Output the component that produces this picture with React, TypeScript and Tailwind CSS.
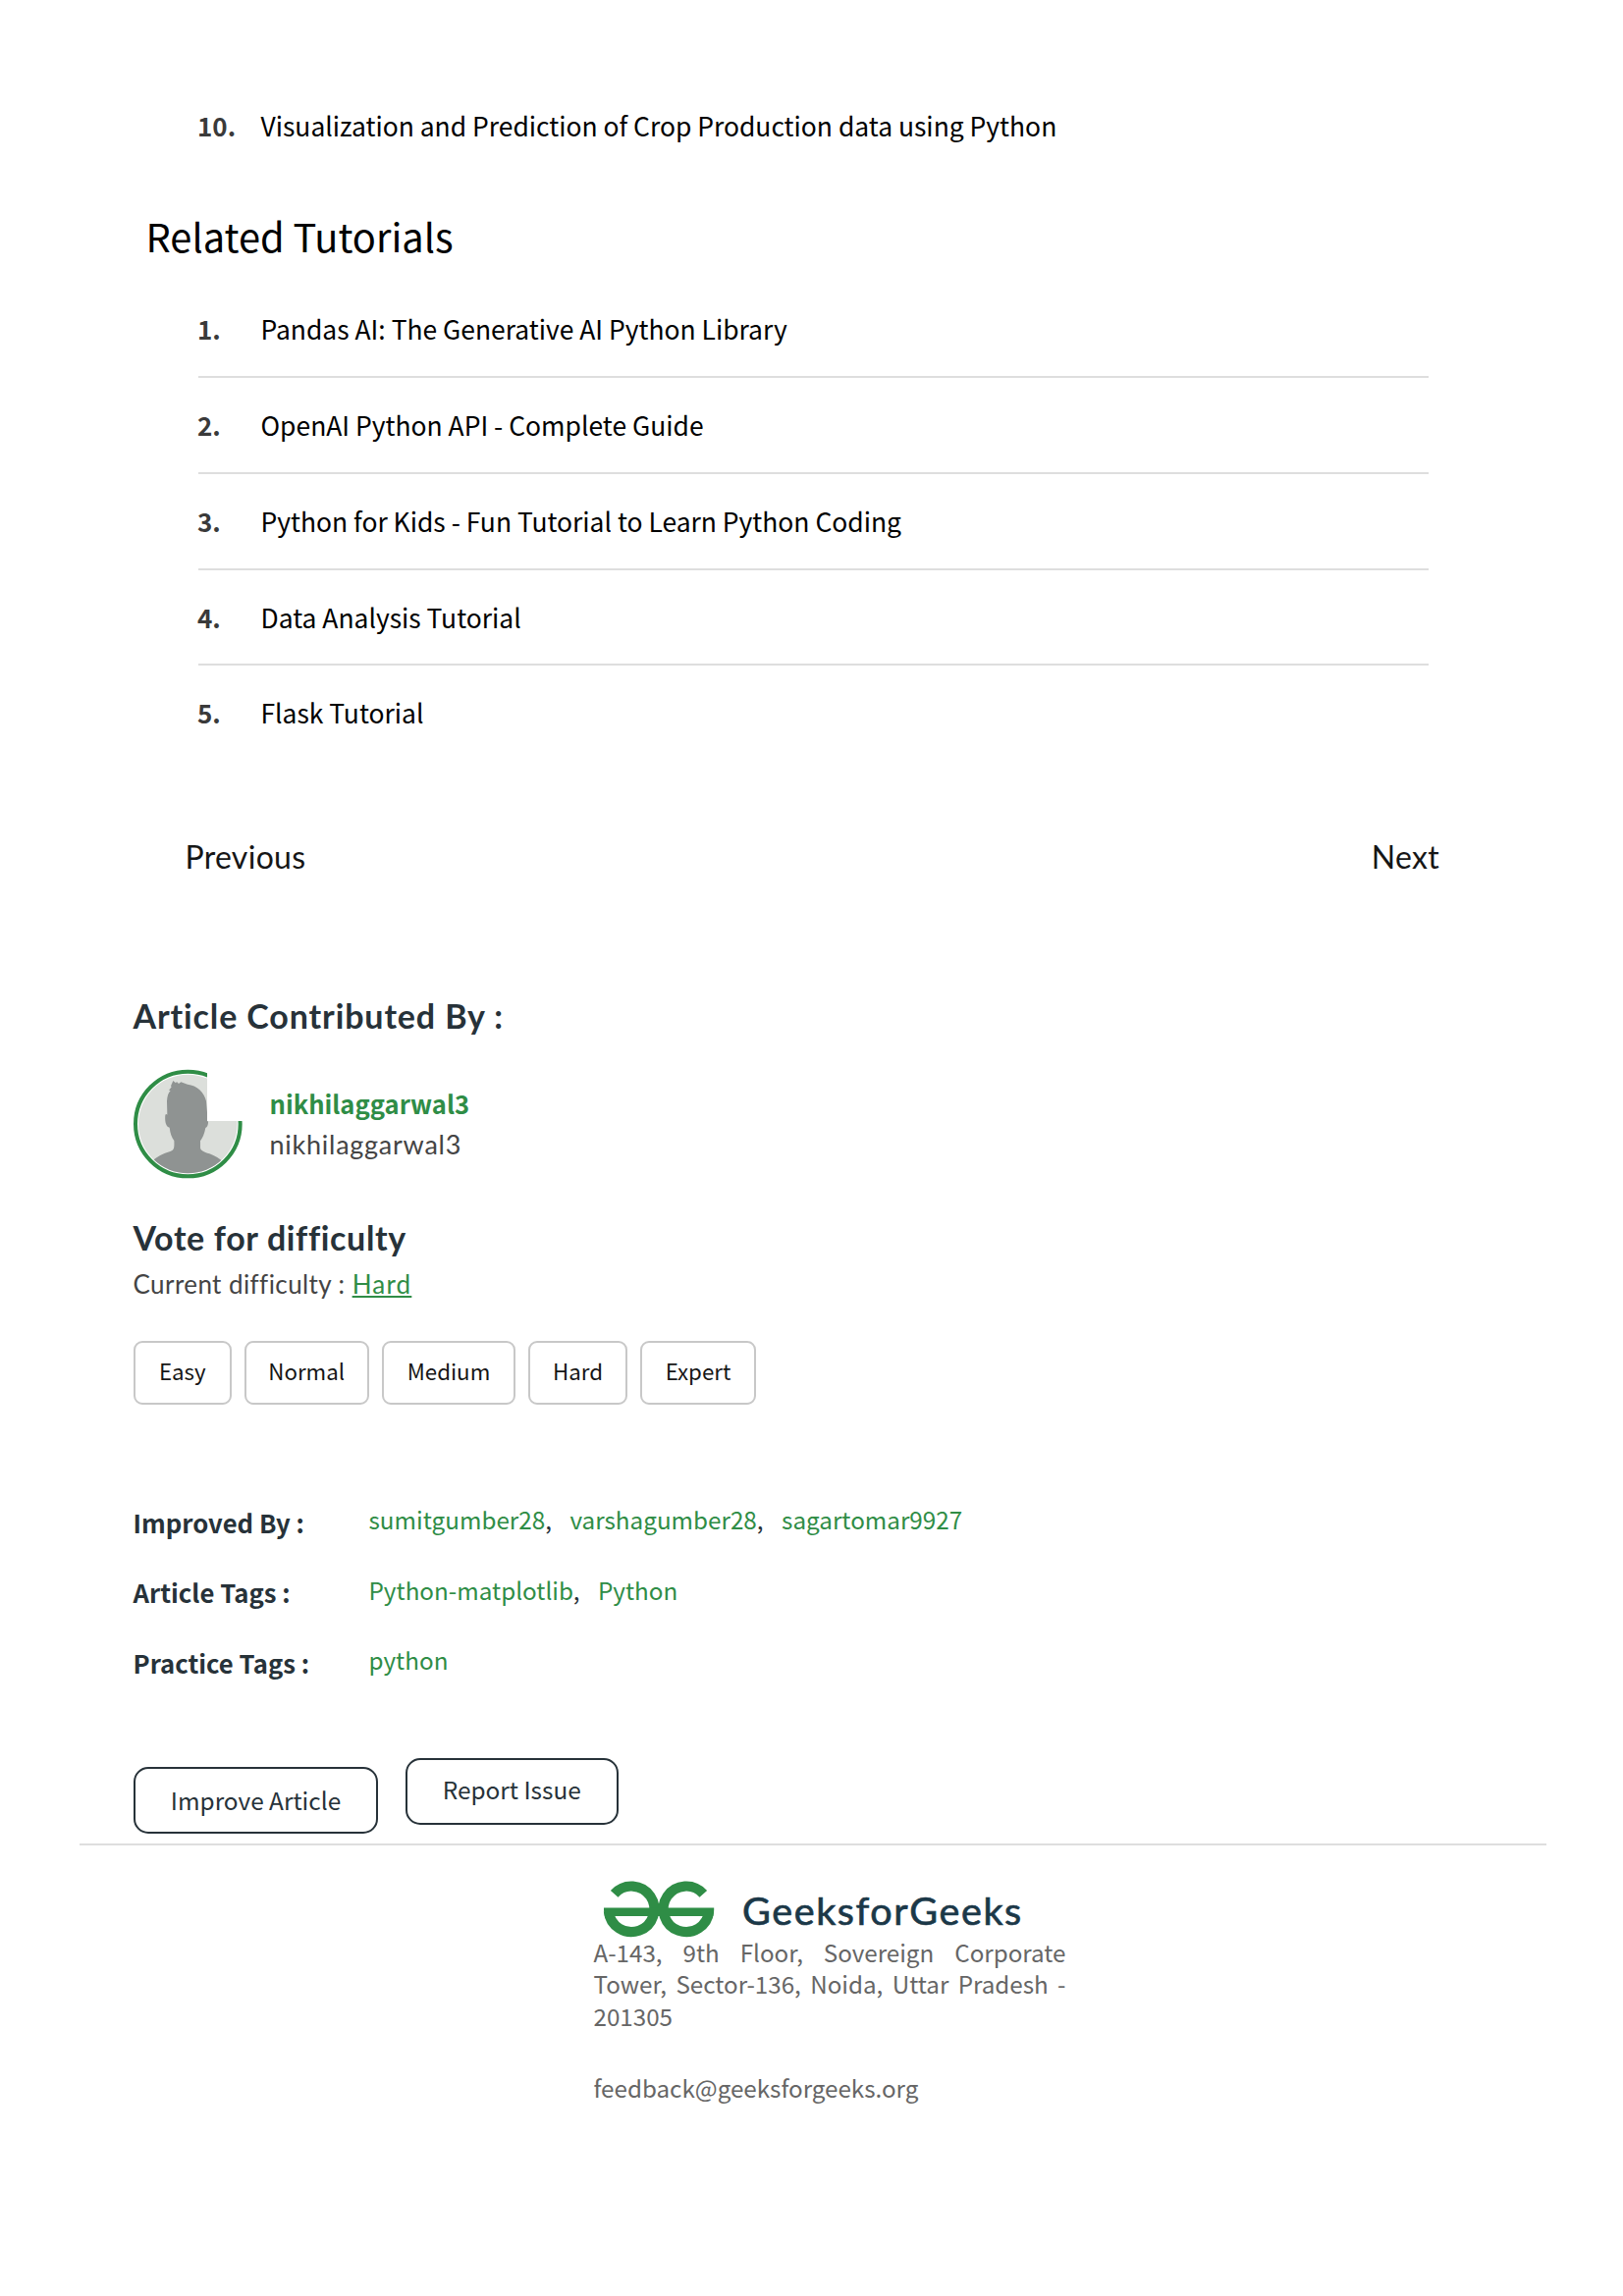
import React from 'react';

const tutorials = [
  'Pandas AI: The Generative AI Python Library',
  'OpenAI Python API - Complete Guide',
  'Python for Kids - Fun Tutorial to Learn Python Coding',
  'Data Analysis Tutorial',
  'Flask Tutorial',
];

const levels = [
  { label: 'Easy', width: 'w-[99.5px]' },
  { label: 'Normal', width: 'w-[127.5px]' },
  { label: 'Medium', width: 'w-[136px]' },
  { label: 'Hard', width: 'w-[101px]' },
  { label: 'Expert', width: 'w-[118px]' },
];

const meta = [
  { label: 'Improved By :', values: ['sumitgumber28', 'varshagumber28', 'sagartomar9927'] },
  { label: 'Article Tags :', values: ['Python-matplotlib', 'Python'] },
  { label: 'Practice Tags :', values: ['python'] },
];

function ListRow({ n, text, line }: { n: number; text: string; line?: boolean }) {
  return (
    <li
      className={`flex h-[97.75px] pt-[31px] text-[26.45px] leading-[34.5px] ${
        line ? 'border-b-2 border-[#dedede]' : ''
      }`}
    >
      <span className="-ml-[1px] w-[64.5px] shrink-0 text-[26px] font-bold text-[#3a3a3a]">{n}.</span>
      <a className="text-black whitespace-nowrap">{text}</a>
    </li>
  );
}

function Avatar() {
  return (
    <svg className="-ml-[6px] block h-[125px] w-[125px] shrink-0" viewBox="0 0 375 375">
      <defs>
        <clipPath id="corner">
          <path d="M0 0H243V186H375V375H0Z" />
        </clipPath>
        <clipPath id="disc">
          <circle cx="184" cy="195" r="151" />
        </clipPath>
      </defs>
      <g clipPath="url(#corner)">
        <circle cx="184" cy="195" r="151" fill="#dcdfdb" />
        <circle cx="184" cy="195" r="160" fill="none" stroke="#2f8d46" strokeWidth="12" />
      </g>
      <g clipPath="url(#disc)">
        <path
          fill="#8f9392"
          d="M70 312Q98 287 130 279C142 275 143 268 142 246C135 236 130 224 128 206C117 203 113 188 115 168C116 164 119 164 121 167L120 125C121 110 124 100 131 93L126 92L134 82L132 79L139 63L147 70L150 66L156 72L163 67L183 74C212 77 234 98 240 125L243 160V186Q247 186 246 192C245 200 243 205 238 207C235 224 229 238 222 247V266C222 276 232 280 250 286Q274 294 298 316V375H70Z"
        />
      </g>
    </svg>
  );
}

function Logo() {
  return (
    <div className="flex h-[64px] items-start pl-[9.5px]">
      <svg className="block h-[64px] w-[114px] shrink-0" viewBox="614 1909 114 64" overflow="visible">
        <g fill="none" stroke="#2f8d46" strokeWidth="10.2">
          <path d="M625.7 1929.3A23.3 23.3 0 1 1 619.9 1947" />
          <path d="M716.3 1929.3A23.3 23.3 0 1 0 722.1 1947" />
        </g>
        <path fill="#2f8d46" d="M615 1943.4H727.2V1946L726.4 1951.9H615.8L615 1946Z" />
      </svg>
      <span className="ml-[28px] mt-[12.5px] whitespace-nowrap font-[Lato] text-[39.5px] leading-[48px] tracking-[1.6px] text-[#1b3848] [-webkit-text-stroke:0.7px_#1b3848]">
        GeeksforGeeks
      </span>
    </div>
  );
}

export default function App() {
  return (
    <div className="h-[2339px] w-[1653px] overflow-hidden bg-white font-['Noto_Sans_CJK_SC',sans-serif]">
      <ul className="ml-[202px] w-[1253px] pt-[80.25px]">
        <ListRow n={10} text="Visualization and Prediction of Crop Production data using Python" />
      </ul>
      <h2 className="mt-[32.3px] ml-[148.5px] text-[39.8px] leading-[60px] text-black">Related Tutorials</h2>
      <ul className="mt-[17px] ml-[202px] w-[1253px]">
        {tutorials.map((t, i) => (
          <ListRow key={t} n={i + 1} text={t} line={i < tutorials.length - 1} />
        ))}
      </ul>

      <div className="mt-[76.6px] ml-[188.5px] flex w-[1277.5px] justify-between font-[Lato] text-[32px] leading-[40px] tracking-[0.3px] text-[#161616]">
        <span>Previous</span>
        <span>Next</span>
      </div>

      <section className="ml-[136px] mt-[121.9px]">
        <h3 className="-ml-[0.5px] font-[Lato] text-[34px] font-bold leading-[40px] tracking-[0.88px] text-[#273239]">
          Article Contributed By :
        </h3>
        <div className="mt-[25.5px] flex h-[125px]">
          <Avatar />
          <div className="ml-[19.5px] pt-[23.5px] leading-[40px]">
            <div className="text-[25.6px] font-bold text-[#2f8d46]">nikhilaggarwal3</div>
            <div className="mt-[2.7px] font-[Lato] text-[27px] tracking-[0.75px] text-[#444]">nikhilaggarwal3</div>
          </div>
        </div>
        <h3 className="-ml-[0.5px] mt-[36.1px] font-[Lato] text-[34px] font-bold leading-[40px] tracking-[0.65px] text-[#273239]">
          Vote for difficulty
        </h3>
        <p className="-ml-[0.5px] mt-[7.2px] font-[Lato] text-[26px] leading-[40px] tracking-[0.42px] text-[#444]">
          Current difficulty :{' '}
          <span className="tracking-[1.2px] text-[#2f8d46] underline decoration-2 underline-offset-[2px]">Hard</span>
        </p>
        <div className="mt-[37.7px] flex gap-[13px]">
          {levels.map((l) => (
            <button
              key={l.label}
              className={`${l.width} h-[65px] rounded-[9px] border-2 border-[#c8c8c8] pb-[6px] text-[22.3px] leading-[40px] text-[#161616]`}
            >
              {l.label}
            </button>
          ))}
        </div>
        <dl className="mt-[96.5px] h-[263.5px] leading-[40px]">
          {meta.map((m) => (
            <div key={m.label} className="flex h-[71.8px]">
              <dt className="-ml-[0.5px] w-[240px] pt-[3.2px] text-[25.7px] font-bold text-[#273239]">{m.label}</dt>
              <dd className="flex gap-[18.5px] pt-[0.4px] text-[24.25px] text-[#2f8d46]">
                {m.values.map((v, i) => (
                  <span key={v}>
                    {v}
                    {i < m.values.length - 1 && <span className="text-[#273239]">,</span>}
                  </span>
                ))}
              </dd>
            </div>
          ))}
        </dl>
        <div className="flex items-start gap-[27.5px] text-[24.4px] leading-[40px] text-[#273239]">
          <button className="mt-[9px] h-[68px] w-[249px] rounded-[15px] border-2 border-[#273239] pb-[1px]">
            Improve Article
          </button>
          <button className="h-[68px] w-[217.5px] rounded-[15px] border-2 border-[#273239] pb-[5px]">
            Report Issue
          </button>
        </div>
      </section>

      <footer className="ml-[80.5px] mt-[9.5px] w-[1494.5px] border-t-2 border-[#dedede] pl-[524px]">
        <div className="mt-[29.5px]">
          <Logo />
        </div>
        <address className="w-[481px] text-[24.2px] not-italic leading-[32.3px] text-[#666]">
          <p className="text-justify">A-143, 9th Floor, Sovereign Corporate Tower, Sector-136, Noida, Uttar Pradesh - 201305</p>
          <p className="mt-[41px]">feedback@geeksforgeeks.org</p>
        </address>
      </footer>
    </div>
  );
}
